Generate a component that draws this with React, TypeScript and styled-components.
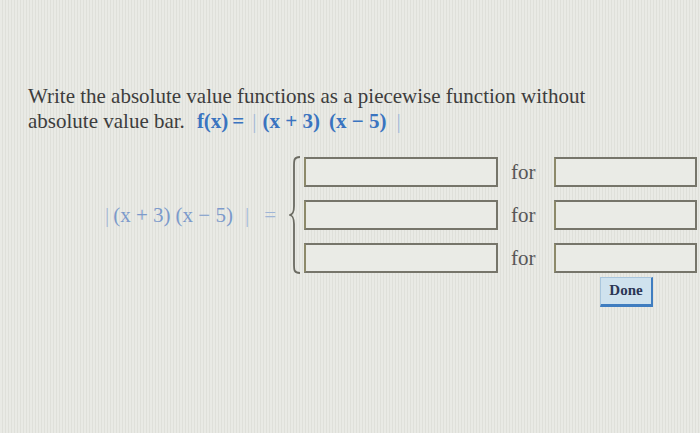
import React from "react";
import styled, { createGlobalStyle } from "styled-components";

const Global = createGlobalStyle`
  html, body { margin: 0; padding: 0; }
  body {
    width: 700px;
    height: 433px;
    overflow: hidden;
    background-color: #e6e7e1;
    background-image: repeating-linear-gradient(90deg, #e9eae5 0px, #e9eae5 2px, #dfe0da 2px, #dfe0da 3px);
    font-family: "Liberation Serif", "Times New Roman", serif;
    color: #454545;
  }
`;

const Page = styled.div`
  padding: 84px 0 0 28px;
  display: flex;
  flex-direction: column;
`;

const Prompt = styled.p`
  margin: 0;
  font-size: 21px;
  line-height: 25px;
  color: #3d3d3d;
  width: 600px;
`;

const Formula = styled.span`
  color: #3a74c0;
  font-weight: bold;
  margin-left: 12px;
  white-space: nowrap;
`;

const Part = styled.span<{ $ml?: number; $light?: boolean }>`
  margin-left: ${(p) => p.$ml ?? 0}px;
  color: ${(p) => (p.$light ? "#a3b8d9" : "inherit")};
  font-weight: ${(p) => (p.$light ? "normal" : "inherit")};
`;

const Piecewise = styled.div`
  margin-top: 23px;
  margin-left: 77px;
  display: grid;
  justify-content: start;
  grid-template-columns: auto auto auto 194px 40px 159px;
  grid-template-rows: 30px 30px 30px auto;
  row-gap: 13px;
  align-items: center;
`;

const Lhs = styled.span`
  grid-column: 1;
  grid-row: 1 / 4;
  font-size: 21px;
  color: #7c9acb;
  white-space: nowrap;
`;

const Equals = styled.span`
  grid-column: 2;
  grid-row: 1 / 4;
  font-size: 21px;
  color: #9fb5d6;
  margin-left: 15px;
`;

const Brace = styled.svg`
  grid-column: 3;
  grid-row: 1 / 4;
  margin-left: 13px;
  margin-right: 3px;
`;

const Field = styled.div<{ $col: number }>`
  grid-column: ${(p) => p.$col};
  height: 26px;
  margin-left: ${(p) => (p.$col === 6 ? 16 : 0)}px;
  border: 2px solid #76756a;
  border-left-color: #8d8a6a;
  background: #eaebe6;
`;

const For = styled.span`
  grid-column: 5;
  margin-left: 13px;
  font-size: 21px;
  color: #575757;
  line-height: 30px;
`;

const Actions = styled.div`
  grid-column: 6;
  grid-row: 4;
  display: flex;
  justify-content: center;
  padding-left: 18px;
  margin-top: -9px;
`;

const DoneButton = styled.button`
  width: 53px;
  height: 30px;
  padding: 0 0 2px;
  background: #cfe2ee;
  border: 1px solid #a9c6dd;
  border-right: 2px solid #3f7dc0;
  border-bottom: 3px solid #3f7dc0;
  font-family: "Liberation Serif", "Times New Roman", serif;
  font-weight: bold;
  font-size: 15px;
  color: #2b3655;
`;

const rows = [0, 1, 2];

export default function App() {
  return (
    <>
      <Global />
      <Page>
        <Prompt>
          Write the absolute value functions as a piecewise function without
          absolute value bar.
          <Formula>
            <Part>f(x)</Part>
            <Part $ml={4}>=</Part>
            <Part $ml={8} $light>|</Part>
            <Part $ml={6}>(x + 3)</Part>
            <Part $ml={9}>(x − 5)</Part>
            <Part $ml={10} $light>|</Part>
          </Formula>
        </Prompt>
        <Piecewise>
          <Lhs>
            <Part $light>|</Part>
            <Part $ml={4}>(x + 3)</Part>
            <Part $ml={5}>(x − 5)</Part>
            <Part $ml={12} $light>|</Part>
          </Lhs>
          <Equals>=</Equals>
          <Brace width="12" height="118" viewBox="0 0 12 118">
            <path
              d="M11 1 C5 1 5 4 5 10 L5 50 C5 56 4 58 1 59 C4 60 5 62 5 68 L5 108 C5 114 5 117 11 117"
              fill="none"
              stroke="#6b6b62"
              strokeWidth="1.8"
            />
          </Brace>
          {rows.map((r) => (
            <React.Fragment key={r}>
              <Field $col={4} style={{ gridRow: r + 1 }} />
              <For style={{ gridRow: r + 1 }}>for</For>
              <Field $col={6} style={{ gridRow: r + 1 }} />
            </React.Fragment>
          ))}
          <Actions>
            <DoneButton>Done</DoneButton>
          </Actions>
        </Piecewise>
      </Page>
    </>
  );
}
